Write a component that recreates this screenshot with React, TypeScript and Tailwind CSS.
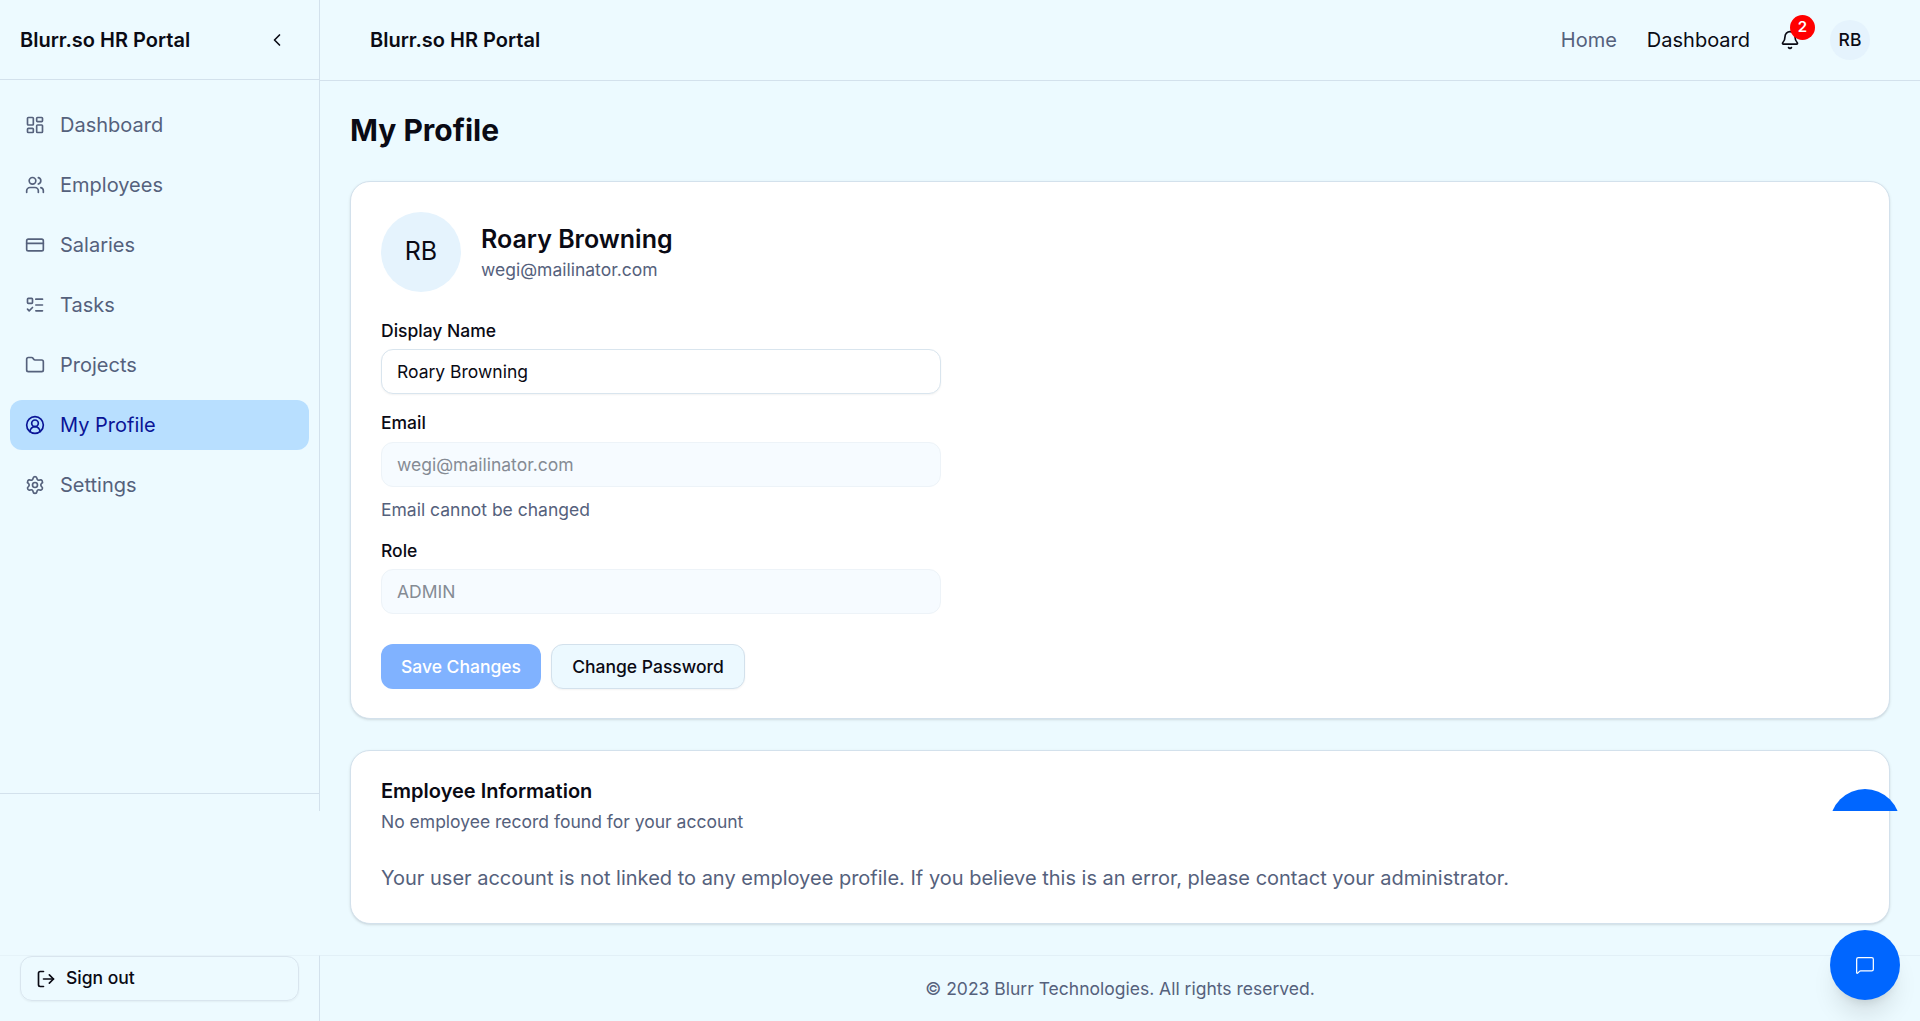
import React from 'react';
import {
  Bell,
  ChevronLeft,
  CircleUserRound,
  CreditCard,
  Folder,
  LayoutDashboard,
  ListTodo,
  LogOut,
  MessageSquare,
  Settings,
  Users,
} from 'lucide-react';

const navItems = [
  { label: 'Dashboard', icon: LayoutDashboard },
  { label: 'Employees', icon: Users },
  { label: 'Salaries', icon: CreditCard },
  { label: 'Tasks', icon: ListTodo },
  { label: 'Projects', icon: Folder },
  { label: 'My Profile', icon: CircleUserRound, active: true },
  { label: 'Settings', icon: Settings },
];

const Sidebar: React.FC = () => (
  <aside className="w-[320px] shrink-0 h-full flex flex-col">
    <div className="h-[811px] shrink-0 flex flex-col border-r border-[#d3e1ec]">
      <div className="h-[80px] shrink-0 pl-[20px] pr-[32px] flex items-center justify-between border-b border-[#d3e1ec]">
        <span className="text-[20px] font-semibold text-[#0a0a14]">Blurr.so HR Portal</span>
        <ChevronLeft size={20} className="text-[#0a0a14]" />
      </div>
      <nav className="h-[714px] shrink-0 px-[10px] pt-[20px] flex flex-col gap-[10px] border-b border-[#d3e1ec]">
        {navItems.map(({ label, icon: Icon, active }) => (
          <div
            key={label}
            className={
              active
                ? 'h-[50px] px-[15px] rounded-[12px] flex items-center gap-[15px] bg-[#b8dfff] text-[#0a1496]'
                : 'h-[50px] px-[15px] rounded-[12px] flex items-center gap-[15px] text-[#55617c]'
            }
          >
            <Icon size={20} />
            <span className="text-[20px]">{label}</span>
          </div>
        ))}
      </nav>
    </div>
    <div className="flex-1" />
    <div className="h-[66px] shrink-0 px-[20px] border-r border-t border-t-[#e6f3f9] border-r-[#d3e1ec]">
      <button className="w-[279px] h-[45px] px-[15px] flex items-center gap-[10px] rounded-[12px] border border-[#d9e5ee] shadow-xs text-[17.5px] font-medium text-[#0a0a14]">
        <LogOut size={20} />
        Sign out
      </button>
    </div>
  </aside>
);

const Header: React.FC = () => (
  <header className="h-[81px] shrink-0 pl-[50px] pr-[50px] flex items-center justify-between border-b border-[#d3e1ec] bg-[#edfaff]">
    <span className="text-[20px] font-semibold text-[#0a0a14]">Blurr.so HR Portal</span>
    <div className="flex items-center">
      <span className="text-[20px] text-[#55617c]">Home</span>
      <span className="ml-[30px] text-[20px] text-[#0a0a14]">Dashboard</span>
      <div className="relative ml-[30px] w-[20px] h-[20px]">
        <Bell size={20} className="text-[#0a0a14]" />
        <span className="absolute -top-[15px] left-[10px] w-[25px] h-[25px] rounded-full bg-[#ff0000] text-white text-[15px] font-semibold flex items-center justify-center">
          2
        </span>
      </div>
      <div className="ml-[30px] w-[40px] h-[40px] pt-[1px] rounded-full bg-[#e5f3fd] flex items-center justify-center text-[17.5px] font-medium text-[#0a0a14]">
        RB
      </div>
    </div>
  </header>
);

const Field: React.FC<{ label: string; value: string; disabled?: boolean }> = ({ label, value, disabled }) => (
  <div className="flex flex-col gap-[10px]">
    <label className="text-[17.5px] leading-[17.5px] font-medium text-[#0a0a14]">{label}</label>
    <input
      readOnly
      value={value}
      className={
        disabled
          ? 'w-[560px] h-[45px] px-[15px] rounded-[12px] border border-[#edf3f8] bg-[#f6fbff] text-[17.5px] text-[#858b94] outline-none'
          : 'w-[560px] h-[45px] px-[15px] rounded-[12px] border border-[#d9e5ee] bg-white shadow-xs text-[17.5px] text-[#0a0a14] outline-none'
      }
    />
  </div>
);

const ProfileCard: React.FC = () => (
  <section className="h-[538px] shrink-0 p-[30px] rounded-[20px] border border-[#d3e1ec] bg-white shadow-sm">
    <div className="flex items-center gap-[20px]">
      <div className="w-[80px] h-[80px] rounded-full bg-[#e5f3fd] flex items-center justify-center text-[25px] text-[#0a0a14]">
        RB
      </div>
      <div className="flex flex-col gap-[2px]">
        <h2 className="text-[25px] leading-[32px] font-semibold text-[#0a0a14]">Roary Browning</h2>
        <p className="text-[17.5px] leading-[25px] text-[#55617c]">wegi@mailinator.com</p>
      </div>
    </div>
    <div className="mt-[29.5px] flex flex-col gap-[20px]">
      <Field label="Display Name" value="Roary Browning" />
      <div>
        <Field label="Email" value="wegi@mailinator.com" disabled />
        <p className="mt-[10px] text-[17.5px] leading-[25px] text-[#55617c]">Email cannot be changed</p>
      </div>
      <Field label="Role" value="ADMIN" disabled />
    </div>
    <div className="mt-[30px] flex gap-[10px]">
      <button className="w-[160px] h-[45px] pt-[1px] rounded-[12px] bg-[#80b2ff] text-white text-[17.5px] font-medium">
        Save Changes
      </button>
      <button className="w-[194px] h-[45px] pt-[1px] rounded-[12px] border border-[#d3e1ec] bg-[#ecf9ff] shadow-xs text-[17.5px] font-medium text-[#0a0a14]">
        Change Password
      </button>
    </div>
  </section>
);

const EmployeeCard: React.FC = () => (
  <section className="h-[174px] shrink-0 px-[30px] pt-[26px] rounded-[20px] border border-[#d3e1ec] bg-white shadow-sm">
    <h3 className="text-[20px] leading-[28px] font-semibold text-[#0a0a14]">Employee Information</h3>
    <p className="mt-[4px] text-[17.5px] leading-[25px] text-[#55617c]">No employee record found for your account</p>
    <p className="mt-[29px] text-[20px] leading-[30px] text-[#55617c]">
      Your user account is not linked to any employee profile. If you believe this is an error, please contact your administrator.
    </p>
  </section>
);

export default function App() {
  return (
    <div className="relative h-screen w-full overflow-hidden flex bg-[#edfaff] font-['Inter',sans-serif]">
      <Sidebar />
      <div className="flex-1 min-w-0 h-full flex flex-col bg-[#ecfaff]">
        <Header />
        <main className="flex-1 px-[30px] pt-[30px] flex flex-col">
          <h1 className="text-[30px] leading-[38px] font-bold text-[#0a0a14] mb-[32px]">My Profile</h1>
          <div className="flex flex-col gap-[31px]">
            <ProfileCard />
            <EmployeeCard />
          </div>
        </main>
        <footer className="h-[66px] shrink-0 pt-[1px] flex items-center justify-center border-t border-[#e2f0f7] text-[17.5px] text-[#55617c]">
          © 2023 Blurr Technologies. All rights reserved.
        </footer>
      </div>

      {/* chat launcher, with the clipped top of its second copy above it */}
      <div className="absolute left-[1830px] top-[789px] w-[70px] h-[22px] overflow-hidden">
        <div className="w-[70px] h-[70px] rounded-full bg-[#0066ff]" />
      </div>
      <button className="absolute left-[1830px] top-[930px] w-[70px] h-[70px] rounded-full bg-[#0066ff] shadow-xl flex items-center justify-center text-white">
        <MessageSquare size={20} strokeWidth={1.5} />
      </button>
    </div>
  );
}
